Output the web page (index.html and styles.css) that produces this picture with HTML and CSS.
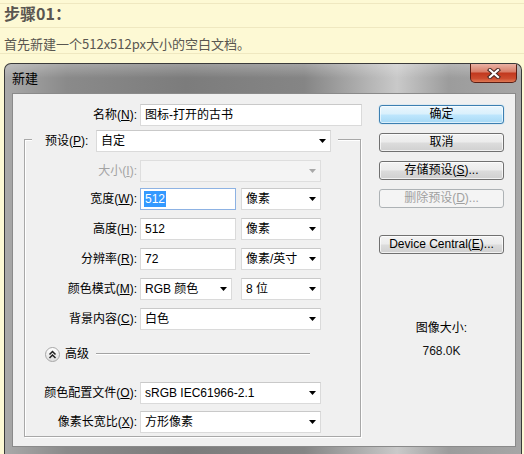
FILE: index.html
```html
<!DOCTYPE html>
<html lang="zh">
<head>
<meta charset="utf-8">
<title>步骤01</title>
<link rel="stylesheet" href="styles.css">
</head>
<body>
<div class="head">步骤01：</div>
<div class="desc">首先新建一个512x512px大小的空白文档。</div>

<div class="dialog">
  <div class="titlebar">
    <span class="title">新建</span>
    <div class="close">
      <svg width="14" height="11" viewBox="0 0 14 11">
        <path d="M3 2 L11 9 M11 2 L3 9" stroke="#4a2a24" stroke-width="4.2" stroke-linecap="square"/>
        <path d="M3 2 L11 9 M11 2 L3 9" stroke="#ffffff" stroke-width="2.2" stroke-linecap="square"/>
      </svg>
    </div>
  </div>

  <div class="panel">
    <div class="left">
      <div class="row name-row">
        <span class="lbl lbl-name">名称(<u>N</u>):</span>
        <div class="field w-name">图标-打开的古书</div>
      </div>

      <div class="group">
        <div class="legend">
          <span class="lbl">预设(<u>P</u>):</span>
          <div class="field select w-preset"><span>自定</span><svg class="arr" width="7" height="4" viewBox="0 0 7 4"><path d="M0 0H7L3.5 4Z" fill="#000"/></svg></div>
        </div>

        <div class="row r-size">
          <span class="lbl lbl-g disabled">大小(<u>I</u>):</span>
          <div class="field select w-full dis"><span></span><svg class="arr" width="7" height="4" viewBox="0 0 7 4"><path d="M0 0H7L3.5 4Z" fill="#a8a8a8"/></svg></div>
        </div>

        <div class="row r-w">
          <span class="lbl lbl-g">宽度(<u>W</u>):</span>
          <div class="field w-num focus"><span class="sel">512</span></div>
          <div class="field select w-unit"><span>像素</span><svg class="arr" width="7" height="4" viewBox="0 0 7 4"><path d="M0 0H7L3.5 4Z" fill="#000"/></svg></div>
        </div>

        <div class="row r-n">
          <span class="lbl lbl-g">高度(<u>H</u>):</span>
          <div class="field w-num">512</div>
          <div class="field select w-unit"><span>像素</span><svg class="arr" width="7" height="4" viewBox="0 0 7 4"><path d="M0 0H7L3.5 4Z" fill="#000"/></svg></div>
        </div>

        <div class="row r-n">
          <span class="lbl lbl-g">分辨率(<u>R</u>):</span>
          <div class="field w-num">72</div>
          <div class="field select w-unit"><span>像素/英寸</span><svg class="arr" width="7" height="4" viewBox="0 0 7 4"><path d="M0 0H7L3.5 4Z" fill="#000"/></svg></div>
        </div>

        <div class="row r-n">
          <span class="lbl lbl-g">颜色模式(<u>M</u>):</span>
          <div class="field select w-mode"><span>RGB 颜色</span><svg class="arr" width="7" height="4" viewBox="0 0 7 4"><path d="M0 0H7L3.5 4Z" fill="#000"/></svg></div>
          <div class="field select w-unit gap9"><span>8 位</span><svg class="arr" width="7" height="4" viewBox="0 0 7 4"><path d="M0 0H7L3.5 4Z" fill="#000"/></svg></div>
        </div>

        <div class="row r-n">
          <span class="lbl lbl-g">背景内容(<u>C</u>):</span>
          <div class="field select w-full"><span>白色</span><svg class="arr" width="7" height="4" viewBox="0 0 7 4"><path d="M0 0H7L3.5 4Z" fill="#000"/></svg></div>
        </div>

        <div class="adv">
          <span class="circ">
            <svg width="9" height="9" viewBox="0 0 9 9"><path d="M1.5 4.5 L4.5 1.5 L7.5 4.5 M1.5 8 L4.5 5 L7.5 8" fill="none" stroke="#222" stroke-width="1.5"/></svg>
          </span>
          <span class="adv-t">高级</span>
          <span class="adv-line"></span>
        </div>

        <div class="row r-prof">
          <span class="lbl lbl-g">颜色配置文件(<u>O</u>):</span>
          <div class="field select w-full"><span>sRGB IEC61966-2.1</span><svg class="arr" width="7" height="4" viewBox="0 0 7 4"><path d="M0 0H7L3.5 4Z" fill="#000"/></svg></div>
        </div>

        <div class="row r-aspect">
          <span class="lbl lbl-g">像素长宽比(<u>X</u>):</span>
          <div class="field select w-full"><span>方形像素</span><svg class="arr" width="7" height="4" viewBox="0 0 7 4"><path d="M0 0H7L3.5 4Z" fill="#000"/></svg></div>
        </div>
      </div>
    </div>

    <div class="right">
      <div class="btn default">确定</div>
      <div class="btn">取消</div>
      <div class="btn">存储预设(<u>S</u>)...</div>
      <div class="btn off">删除预设(<u>D</u>)...</div>
      <div class="btn dc">Device Central(<u>E</u>)...</div>
      <div class="info">图像大小:</div>
      <div class="info val">768.0K</div>
    </div>
  </div>
</div>
</body>
</html>
```

FILE: styles.css
```css
* { box-sizing: border-box; }

html, body {
  margin: 0;
  padding: 0;
}

body {
  width: 524px;
  height: 454px;
  overflow: hidden;
  background: #fdf9d4;
  font-family: "Liberation Sans", "Noto Sans CJK SC", sans-serif;
  color: #000;
}

.head {
  margin-top: 3px;
  border-top: 1px solid #efe8c0;
  border-bottom: 1px solid #efe8c0;
  height: 25px;
  padding: 0 4px;
  font-size: 16px;
  line-height: 18px;
  font-weight: bold;
  color: #5a5650;
  font-family: "Noto Sans CJK SC", sans-serif;
}

.desc {
  height: 26px;
  border-bottom: 1px solid #efe8c0;
  padding: 7px 4px 0;
  font-size: 13px;
  line-height: 17px;
  color: #595650;
  font-family: "Noto Sans CJK SC", sans-serif;
}

.dialog {
  margin: 9px 0 0 4px;
  width: 518px;
  height: 400px;
  border: 1px solid #3a3a3a;
  border-bottom: none;
  border-radius: 7px 7px 0 0;
  background:
    linear-gradient(180deg, rgba(255,255,255,0.25) 0, rgba(255,255,255,0) 14px),
    linear-gradient(90deg, #a9a9a9 0%, #8a8a8a 12%, #7c7c7c 35%, #858585 58%, #c9c9c9 76%, #9c9c9c 86%, #a6a6a6 100%);
  overflow: hidden;
}

.titlebar {
  height: 29px;
  display: flex;
  align-items: flex-start;
}

.title {
  margin: 6px 0 0 7px;
  font-size: 13px;
  line-height: 16px;
  color: #000;
  font-family: "Noto Sans CJK SC", sans-serif;
}

.close {
  margin-left: auto;
  margin-right: 4px;
  width: 47px;
  height: 19px;
  border: 1px solid #5a1e14;
  border-top: none;
  border-radius: 0 0 5px 5px;
  background: linear-gradient(180deg, #eab2a4 0%, #d9806b 42%, #c2391f 52%, #cc4b2e 80%, #e07a55 100%);
  display: flex;
  align-items: center;
  justify-content: center;
}

.panel {
  margin: 0 5px 0 7px;
  height: 354px;
  background: #f0f0f0;
  border: 1px solid #8a8a8a;
  display: flex;
  font-size: 12px;
}

.left {
  width: 350px;
  padding-top: 10px;
}

.row {
  display: flex;
  align-items: center;
  height: 22px;
}

.lbl {
  white-space: nowrap;
  line-height: 16px;
}

.lbl-name {
  width: 124px;
  text-align: right;
  margin-right: 3px;
}

.lbl-g {
  width: 112px;
  text-align: right;
  margin-right: 3px;
}

.disabled { color: #a3a3a3; }

u { text-decoration: underline; text-underline-offset: 1px; }

.field {
  height: 22px;
  background: #fff;
  border: 1px solid #dadada;
  border-top-color: #c9c9c9;
  padding: 0 4px;
  line-height: 20px;
  white-space: nowrap;
  overflow: hidden;
  font-size: 12px;
}

.select {
  display: flex;
  align-items: center;
  justify-content: space-between;
  padding-right: 4px;
}

.select .arr { flex: none; }

.dis { background: #f4f4f4; border-color: #dedede; }

.focus { border-color: #8db2e3; padding-left: 3px; }

.sel {
  background: #3399ff;
  color: #fff;
  padding: 1px 1px;
}

.w-name { width: 222px; }
.w-preset { width: 235px; }
.w-full { width: 181px; }
.w-num { width: 96px; }
.w-unit { width: 80px; margin-left: 5px; }
.w-unit.gap9 { margin-left: 9px; }
.w-mode { width: 92px; }

.group {
  margin: 13px 0 0 11px;
  width: 337px;
  border: 1px solid #a8a8a8;
  box-shadow: 1px 1px 0 #fff, inset 1px 1px 0 #fff;
  padding-bottom: 3px;
}

.legend {
  margin: -10px 0 0 7px;
  width: 306px;
  height: 22px;
  padding: 0 7px 0 13px;
  background: #f0f0f0;
  display: flex;
  align-items: center;
  justify-content: space-between;
}

.r-size { margin-top: 8px; }
.r-w { margin-top: 6px; }
.r-n { margin-top: 8px; }
.r-prof { margin-top: 20px; }
.r-aspect { margin-top: 7px; }

.adv {
  margin-top: 16px;
  height: 16px;
  display: flex;
  align-items: center;
  padding-left: 20px;
}

.circ {
  width: 15px;
  height: 15px;
  border-radius: 50%;
  border: 1px solid #a7a7a7;
  background: linear-gradient(180deg, #ffffff, #dedede);
  display: flex;
  align-items: center;
  justify-content: center;
}

.adv-t {
  margin-left: 5px;
  line-height: 16px;
}

.adv-line {
  margin-left: 7px;
  width: 214px;
  height: 2px;
  border-top: 1px solid #a3a3a3;
  border-bottom: 1px solid #fff;
}

.right {
  margin-left: 16px;
  width: 125px;
  padding-top: 11px;
  display: flex;
  flex-direction: column;
}

.btn {
  height: 19px;
  margin-bottom: 9px;
  border: 1px solid #707070;
  border-radius: 3px;
  background: linear-gradient(180deg, #f3f3f3 0%, #ebebeb 48%, #dcdcdc 52%, #d0d0d0 100%);
  box-shadow: inset 0 0 0 1px rgba(255,255,255,0.7);
  text-align: center;
  line-height: 17px;
  font-size: 12px;
  white-space: nowrap;
}

.btn.default {
  border-color: #3c7fb1;
  background: linear-gradient(180deg, #eaf6fd 0%, #d9f0fc 48%, #bee6fd 52%, #a7d9f5 100%);
  box-shadow: inset 0 0 0 1px rgba(255,255,255,0.6), 0 0 1px #48b0e8;
}

.btn.off {
  border-color: #adb2b5;
  background: #f4f4f4;
  color: #a0a0a0;
  box-shadow: none;
}

.btn.dc {
  margin-top: 18px;
}

.info {
  text-align: center;
  line-height: 16px;
  margin-top: 57px;
}

.info.val {
  margin-top: 7px;
  color: #111;
}
```
